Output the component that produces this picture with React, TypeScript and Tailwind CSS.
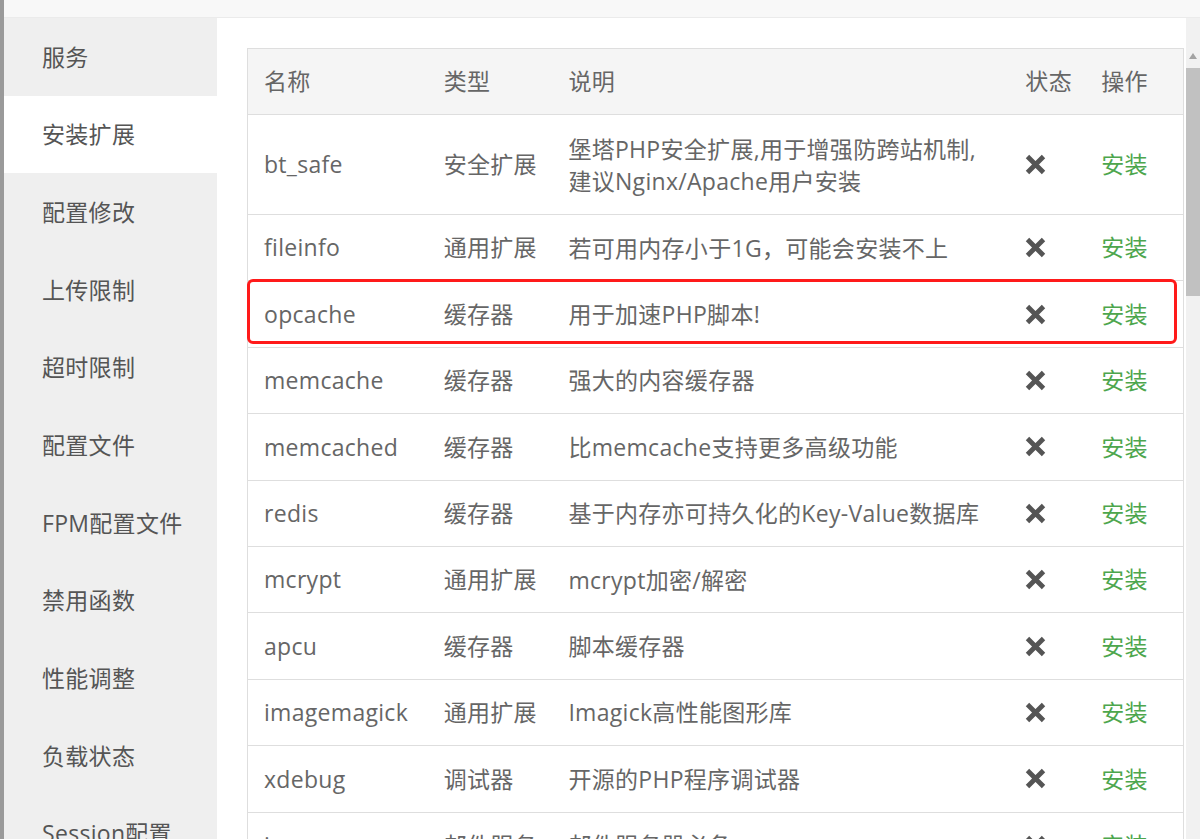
import React from "react";

const menu = [
  "服务",
  "安装扩展",
  "配置修改",
  "上传限制",
  "超时限制",
  "配置文件",
  "FPM配置文件",
  "禁用函数",
  "性能调整",
  "负载状态",
  "Session配置",
];

interface Ext {
  name: string;
  type: string;
  desc: string[];
}

const exts: Ext[] = [
  { name: "bt_safe", type: "安全扩展", desc: ["堡塔PHP安全扩展,用于增强防跨站机制,", "建议Nginx/Apache用户安装"] },
  { name: "fileinfo", type: "通用扩展", desc: ["若可用内存小于1G，可能会安装不上"] },
  { name: "opcache", type: "缓存器", desc: ["用于加速PHP脚本!"] },
  { name: "memcache", type: "缓存器", desc: ["强大的内容缓存器"] },
  { name: "memcached", type: "缓存器", desc: ["比memcache支持更多高级功能"] },
  { name: "redis", type: "缓存器", desc: ["基于内存亦可持久化的Key-Value数据库"] },
  { name: "mcrypt", type: "通用扩展", desc: ["mcrypt加密/解密"] },
  { name: "apcu", type: "缓存器", desc: ["脚本缓存器"] },
  { name: "imagemagick", type: "通用扩展", desc: ["Imagick高性能图形库"] },
  { name: "xdebug", type: "调试器", desc: ["开源的PHP程序调试器"] },
  { name: "imap", type: "邮件服务", desc: ["邮件服务器必备"] },
];

function Cross() {
  return (
    <svg width="21" height="21" viewBox="0 0 20 20" className="block">
      <path d="M4 4 L16 16 M16 4 L4 16" stroke="#555" strokeWidth="4.6" strokeLinecap="square" />
    </svg>
  );
}

export default function App() {
  return (
    <div
      className="w-[1200px] h-[839px] overflow-hidden flex bg-[#9a9a9a] text-[#666] tracking-[0.3px]"
      style={{ fontFamily: '"Open Sans", "Noto Sans CJK SC", sans-serif' }}
    >
      <div className="ml-[4px] flex-1 flex flex-col bg-white">
        {/* top strip */}
        <div className="h-[18px] shrink-0 bg-[#f8f8f8] border-b border-[#ebebeb]" />

        <div className="flex flex-1 min-h-0">
          {/* Sidebar */}
          <div className="w-[213px] shrink-0 bg-[#efefef]">
            {menu.map((m, i) => (
              <div
                key={m}
                className={`h-[77.7px] flex items-center pl-[38px] text-[23px] text-[#555] whitespace-nowrap ${i === 1 ? "bg-white" : ""}`}
              >
                {m}
              </div>
            ))}
          </div>

          {/* Content */}
          <div className="flex-1 flex min-w-0">
            <div className="flex-1 pl-[30px] pt-[30px] relative">
              <div className="w-[937px] border border-[#dedede] border-b-0 text-[23px] whitespace-nowrap">
                <div className="flex h-[66px] items-center bg-[#f5f5f5] border-b border-[#dedede]">
                  <div className="w-[180px] pl-[16px]">名称</div>
                  <div className="w-[125px] pl-[16px]">类型</div>
                  <div className="w-[458px] pl-[16px]">说明</div>
                  <div className="w-[76px] pl-[16px]">状态</div>
                  <div className="w-[98px] pl-[16px]">操作</div>
                </div>
                {exts.map((e) => (
                  <div
                    key={e.name}
                    className={`flex items-center border-b border-[#dedede] ${e.desc.length > 1 ? "h-[100px]" : "h-[66.4px]"}`}
                  >
                    <div className="w-[180px] pl-[16px]">{e.name}</div>
                    <div className="w-[125px] pl-[16px]">{e.type}</div>
                    <div className="w-[458px] pl-[16px] leading-[32px]">
                      {e.desc.map((d) => (
                        <div key={d}>{d}</div>
                      ))}
                    </div>
                    <div className="w-[76px] pl-[16px]">
                      <Cross />
                    </div>
                    <div className="w-[98px] pl-[16px] text-[#4da64d]">安装</div>
                  </div>
                ))}
              </div>

              {/* highlight */}
              <div className="absolute left-[30px] top-[261px] w-[930px] h-[65px] border-[3px] border-[#ff1a1a] rounded-[6px]" />
            </div>

            {/* Scrollbar */}
            <div className="w-[14px] shrink-0 bg-[#f1f1f1] flex flex-col items-center pt-[34px]">
              <svg width="10" height="8" viewBox="0 0 10 8">
                <path d="M5 1 L9 7 L1 7 Z" fill="#a3a3a3" />
              </svg>
              <div className="mt-[8px] w-full h-[228px] bg-[#c1c1c1]" />
            </div>
          </div>
        </div>
      </div>
    </div>
  );
}
